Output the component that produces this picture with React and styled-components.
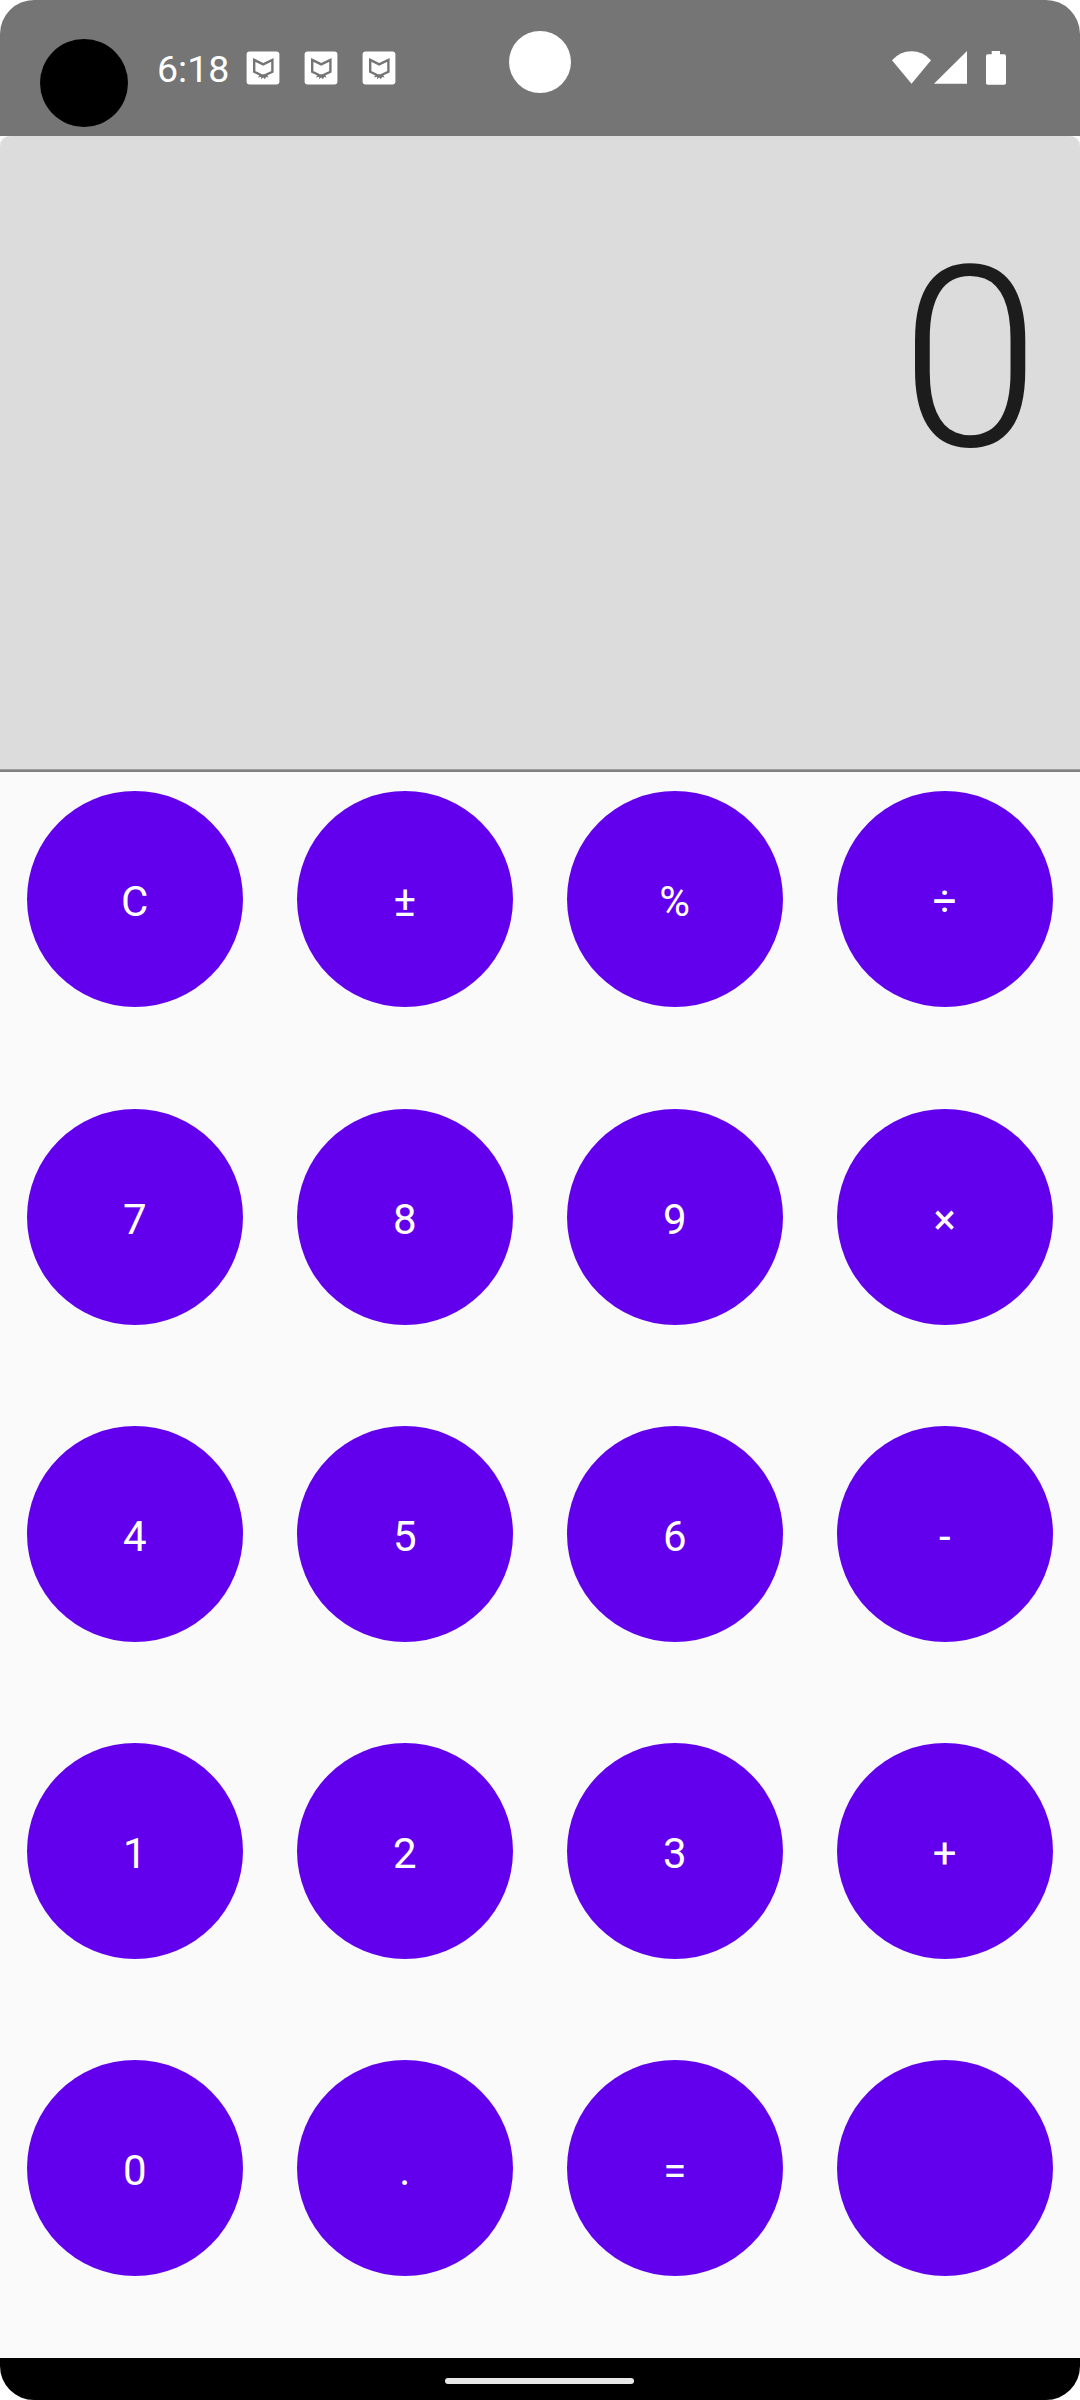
import React from "react";
import styled, { createGlobalStyle } from "styled-components";

const GlobalStyle = createGlobalStyle`
  * { box-sizing: border-box; }
  body { margin: 0; background: #fff; font-family: Roboto, "Liberation Sans", sans-serif; }
`;

const Screen = styled.div`
  width: 1080px;
  height: 2400px;
  display: flex;
  flex-direction: column;
  border-radius: 34px;
  overflow: hidden;
  background: #fafafa;
`;

const StatusBar = styled.header`
  position: relative;
  flex: none;
  height: 136px;
  padding: 0 72px 0 40px;
  display: flex;
  justify-content: space-between;
  background: #757575;
  color: #fff;
`;

const StatusGroup = styled.div`
  display: flex;
  align-items: flex-start;
`;

const CameraDot = styled.span`
  width: 88px;
  height: 88px;
  margin-top: 39px;
  border-radius: 50%;
  background: #000;
`;

const Clock = styled.span`
  width: 71px;
  margin: 47px 0 0 29px;
  font-size: 37.5px;
  line-height: 44px;
  white-space: nowrap;
`;

const Notices = styled.div`
  display: flex;
  gap: 24px;
  margin: 51px 0 0 18px;
`;

const Cutout = styled.span`
  position: absolute;
  left: 509px;
  top: 31px;
  width: 62px;
  height: 62px;
  border-radius: 50%;
  background: #fff;
`;

const Signals = styled.svg`
  display: block;
  margin-top: 51px;
  width: 116px;
  height: 34px;
`;

const ShieldIcon = styled.svg`
  display: block;
  width: 34px;
  height: 34px;
`;

const DisplayFrame = styled.section`
  flex: none;
  height: 636px;
`;

const Display = styled.div`
  height: 636px;
  padding: 77px 40px 0 0;
  border-radius: 10px 10px 0 0;
  background: #dcdcdc;
  box-shadow: inset 0 -2px #808080, inset 0 -3px #9e9e9e;
  color: #1c1c1c;
  text-align: right;
  font-size: 252px;
  font-weight: 300;
  line-height: 295px;
`;

const Keypad = styled.main`
  flex: 1;
  display: grid;
  grid-template-columns: repeat(4, 1fr);
  grid-template-rows: 318px repeat(4, 317px);
  justify-items: center;
`;

const Key = styled.button`
  width: 216px;
  height: 216px;
  margin: 19px 0 0;
  padding: 6px 0.5px 0 0;
  border: 0;
  border-radius: 50%;
  background: #6200ee;
  color: #fff;
  font: 400 42px/50px Roboto, "Liberation Sans", sans-serif;
`;

const NavBar = styled.footer`
  flex: none;
  height: 42px;
  padding: 20px 1px 0 0;
  background: #000;
`;

const Handle = styled.div`
  width: 189px;
  height: 6px;
  margin: 0 auto;
  border-radius: 3px;
  background: #e8e8e8;
`;

const KEYS = ["C", "±", "%", "÷", "7", "8", "9", "×", "4", "5", "6", "-", "1", "2", "3", "+", "0", ".", "=", ""];

function Shield() {
  return (
    <ShieldIcon viewBox="0 0 34 34">
      <rect x="0.6" y="0.5" width="32.8" height="33" rx="3" fill="#fff" />
      <path d="M8.2 8.9L17.2 13.4L26.4 8.9V20.8L20.5 23.5L18.5 24.6H15.5L14 23.5L8.2 20.8Z" fill="none" stroke="#757575" strokeWidth="2.4" />
      <path d="M11.8 26.6L14 23.5H20.800L22.600 26.400L20.200 26L18.800 28.200L17.300 26.500L14.800 28.200L15.300 25.800Z" fill="#757575" />
    </ShieldIcon>
  );
}

export default function App() {
  return (
    <>
      <GlobalStyle />
      <Screen>
        <StatusBar>
          <StatusGroup>
            <CameraDot />
            <Clock>6:18</Clock>
            <Notices>
              <Shield />
              <Shield />
              <Shield />
            </Notices>
          </StatusGroup>
          <Cutout />
          <Signals viewBox="892 51 116 34" fill="#fff">
            <path d="M892 60.3Q900 51.3 911.5 51.3T931 60.3L911.5 83.7Z" />
            <path d="M934 83.7L967 51V83.7Z" />
            <path d="M991.7 51H1000V54.2H1004.2Q1006 54.2 1006 56V83Q1006 84.8 1004.2 84.8H987.8Q986 84.8 986 83V56Q986 54.2 987.8 54.2H991.7Z" />
          </Signals>
        </StatusBar>
        <DisplayFrame>
          <Display>0</Display>
        </DisplayFrame>
        <Keypad>
          {KEYS.map((label, i) => (
            <Key key={i}>{label}</Key>
          ))}
        </Keypad>
        <NavBar>
          <Handle />
        </NavBar>
      </Screen>
    </>
  );
}
